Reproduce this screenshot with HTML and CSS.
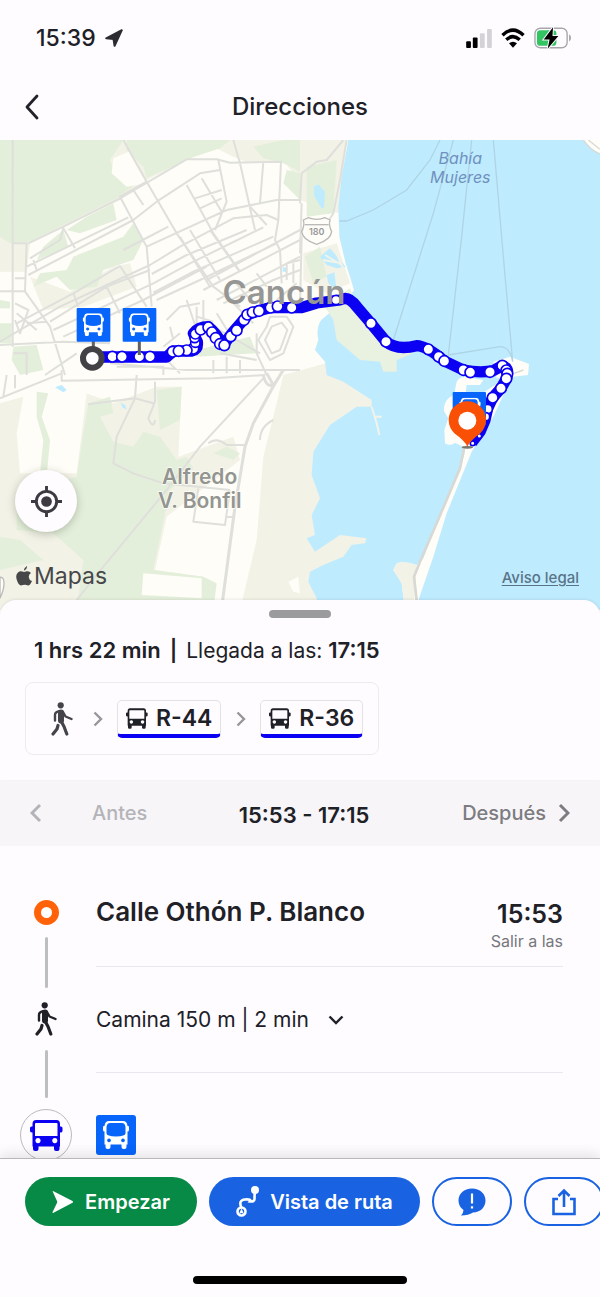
FILE: index.html
```html
<!DOCTYPE html>
<html lang="es">
<head>
<meta charset="utf-8">
<meta name="viewport" content="width=device-width, initial-scale=1">
<title>Direcciones</title>
<link rel="stylesheet" href="styles.css">
</head>
<body>
<svg class="defs" aria-hidden="true">
  <symbol id="bus" viewBox="0 0 33 31"><path fill="currentColor" fill-rule="evenodd" d="M6 0H26.500Q30 0 30 4V6.500H31Q32.500 6.500 32.500 8V11Q32.500 12.500 30 12.500V26.500H29.500V29Q29.500 31 27.500 31H26Q24 31 24 29V26.500H8.500V29Q8.500 31 6.500 31H5Q3 31 3 29V26.500H2.500V12.500Q0 12.500 0 11V8Q0 6.500 1.500 6.500H2.500V4Q2.500 0 6 0ZM6 3Q5 3 5 4V16H27.500V4Q27.500 3 26.500 3ZM8 18a2.600 2.600 0 1 0 .01 0ZM24.800 18a2.600 2.600 0 1 0 .01 0Z"/></symbol>
  <symbol id="bus-round" viewBox="0 0 26 28"><path fill="currentColor" fill-rule="evenodd" d="M6 0H20Q24 0 24.500 5H25Q26 5 26 6V9Q26 10.500 24.500 10.500V23.500H23.500V26Q23.500 28 21.500 28H20.500Q18.500 28 18.500 26V23.500H7.500V26Q7.500 28 5.500 28H4.500Q2.500 28 2.500 26V23.500H1.500V10.500Q0 10.500 0 9V6Q0 5 1 5H1.500Q2 0 6 0ZM7 2Q4 2 3.500 6V12.500Q3.500 15 13 15.500Q22.500 15 22.500 12.500V6Q22 2 19 2ZM6 17.500a1.900 1.900 0 1 0 .01 0ZM20 17.500a1.900 1.900 0 1 0 .01 0Z"/></symbol>
  <symbol id="walk" viewBox="0 0 22 34"><circle cx="9.700" cy="3.300" r="3.100" fill="currentColor"/><path fill="none" stroke="currentColor" stroke-linecap="round" stroke-linejoin="round" d="M10 10.500V18.500" stroke-width="6"/><path fill="none" stroke="currentColor" stroke-linecap="round" stroke-linejoin="round" stroke-width="2.400" d="M8 9.300Q4 10 4 13V18.500M12 10L14.500 14.500L20.500 17"/><path fill="none" stroke="currentColor" stroke-linecap="round" stroke-linejoin="round" stroke-width="3.200" d="M10 19L13 24.500L15.800 32M7 23.500L6 27L2 32"/></symbol>
</svg>
<div class="app">
  <div class="status">
    <span class="clock">15:39</span>
    <svg class="arrow" viewBox="0 0 18 18"><path d="M16.800 1.200L9.600 16.800L8.500 10L1.200 9.300Z" fill="#2b2b31" stroke="#2b2b31" stroke-width="2" stroke-linejoin="round"/></svg>
    <div class="indicators">
      <svg class="signal" viewBox="0 0 27 20"><rect x="0" y="13" width="5" height="7" rx="1"/><rect x="7" y="9" width="5" height="11" rx="1"/><rect x="14.500" y="4.500" width="5" height="15.500" rx="1" fill="#d3d2d7"/><rect x="22" y="0" width="5" height="20" rx="1" fill="#d3d2d7"/></svg>
      <svg class="wifi" viewBox="0 0 24 20"><path d="M1.500 7.200Q12-3 22.500 7.200M5.300 11.800Q12 5.500 18.700 11.800" fill="none" stroke="#000" stroke-width="3.400"/><path d="M8 15.300Q12 12 16 15.300L12 19.700Z"/></svg>
      <svg class="battery" viewBox="0 0 39 22"><rect x="1" y="1" width="33" height="20" rx="5.500" fill="none" stroke="#a6a6ab" stroke-width="1.400"/><rect x="3" y="3" width="20" height="16" rx="3.500" fill="#34c463"/><path d="M36 7.500Q38 8 38 11T36 14.500Z" fill="#a6a6ab"/><path d="M19.500 0L10 12.500H16L14 22L25 9H19Z" fill="#000" stroke="#fefcff" stroke-width="2" paint-order="stroke"/></svg>
    </div>
  </div>
  <header class="bar">
    <button class="back" aria-label="Volver"><svg viewBox="0 0 16 28"><path d="M13 3L3 14L13 25" fill="none" stroke="#22222a" stroke-width="2.800" stroke-linecap="round" stroke-linejoin="round"/></svg></button>
    <h1>Direcciones</h1>
  </header>
  <main class="main">
    <section class="map" aria-label="Mapa">
      <svg class="map-art" viewBox="0 0 1800 1410">
        <rect width="1800" height="1410" fill="#fefdf7"/>
        <g fill="#f2f2e6">
          <path d="M0 0H1020V130H900L850 60L750 70L700 50L640 20L560 60L440 120L360 180L90 310L80 395H0Z"/>
          <path d="M0 790L70 770L50 880L60 1000H230L260 760L340 790L470 740H545L535 950L700 890L720 960L500 1130L465 1290L610 1310L640 1410H0Z"/>
          <path d="M850 705L1230 600V1410H720L770 1200L790 950L820 830Z"/>
          <path d="M900 0H1040L1015 220L900 180Z"/><path d="M910 340L1010 310L1050 430L980 460L910 420Z"/>
          <path d="M210 455L340 380L390 370L410 440L250 500L130 510L90 410Z"/>
        </g>
        <g fill="#e4efdb">
          <path d="M0 0H370L330 60L350 110L410 130L350 175L230 235L90 305L30 310L0 290Z"/>
          <path d="M380 0H690L660 25L570 55L440 115L430 80L380 30Z"/>
          <path d="M760 20L850 0H900V95L850 70L790 55Z"/><path d="M860 90L900 100V180L850 130Z"/>
          <path d="M220 350L370 290L400 250L430 300L400 360L310 390L290 440L210 450L170 410L100 440L120 400L200 390Z"/>
          <path d="M260 230L340 190L350 240L240 280L200 270ZM130 320L190 270L205 320L110 360ZM0 480L30 485V505H0ZM0 550H35V610H0ZM40 620L110 615L130 690L60 705L35 660ZM590 630L750 590L770 640L590 650Z"/>
          <path d="M110 755L145 760L125 830L150 900L140 1010L120 1000L130 900L110 830Z"/>
          <path d="M265 790L330 770L340 820L300 830L340 905L400 920L430 875L480 890L530 960L560 950L580 985L510 1050L460 1290L610 1310L650 1330L640 1410H230L250 1260L160 1180L50 1170L50 1060L230 1010L250 880Z"/>
          <path d="M470 750L545 740L540 840L480 870ZM640 940L680 920L720 940L700 960ZM0 1190L60 1200L130 1260L0 1290Z"/>
          <path d="M920 80L1010 60L1000 220L920 230ZM915 350L960 320L980 410L940 430Z"/>
        </g>
        <g fill="#fefdf7"><path d="M430 1300L605 1315V1375L425 1365ZM865 1325L895 1310L900 1360L880 1355ZM510 90L560 80V120L510 110Z"/><path d="M340 55L385 35L440 130L380 140L335 100Z"/></g>
        <path fill="#bfebff" d="M1045 0L1025 110L1015 200L1018 290L1037 370L1050 410L1062 450L1048 470L975 530Q945 550 955 600L945 630L975 665L980 705L1030 725L1115 780L1115 800L1070 800L990 855L940 935L935 1005L960 1075L935 1125L945 1185L920 1195L945 1235L1020 1185L1100 1195L1095 1210L1055 1215L1030 1250L970 1275L930 1295L925 1325L950 1375V1410H1800V0Z"/>
        <path fill="#e9f1e1" d="M975 500L1050 445L1080 520L1170 610L1240 640L1190 660V695H1150L1140 665L1080 660L1010 600L1000 540Z"/>
        <path fill="#bfebff" d="M941 140L955 133L975 155L972 205L965 205L943 170ZM960 350L990 325L1037 380L1010 385L980 375ZM980 405L1003 397L1010 450L985 430ZM165 742L185 735L200 750L190 757ZM362 788L375 795L380 808L368 803ZM848 380L860 385V395L848 395Z"/>
        <path d="M970 360L1025 370M975 345L1025 375M1005 330L1030 385M1115 800L1130 850L1138 885M1125 830L1145 830" stroke="#f2f3e9" stroke-width="6" fill="none"/>
        <g fill="#fefdf7"><path d="M1750 0H1800V42Q1770 25 1750 0Z"/><path d="M1480 665L1530 650L1587 672L1584 705L1540 710L1490 715Z"/><path d="M1370 725Q1380 708 1400 712L1450 720L1440 735L1400 735L1395 775H1365Q1362 750 1370 725Z"/><path d="M1375 755L1345 775Q1328 795 1333 815L1345 835L1333 870L1335 910Q1350 920 1365 908L1385 918L1395 935L1380 990L1310 1150L1270 1255L1250 1275Q1215 1262 1190 1270L1180 1290L1205 1330L1215 1410H1245L1300 1250L1340 1120L1415 935L1480 830L1540 700L1430 770Z"/></g>
        <path fill="#f2f2e6" d="M1250 1275Q1215 1262 1190 1270L1180 1290L1205 1330L1215 1410H1240Z"/>
        <path d="M1392 925L1380 985L1310 1150L1260 1265L1242 1310L1252 1400" fill="none" stroke="#d8d8d5" stroke-width="8"/>
        <path d="M1750 0Q1770 30 1800 42M1765 0L1800 28M1543 700L1570 690" fill="none" stroke="#d8d8d5" stroke-width="4"/>
        <g fill="none" stroke="#afd4e5" stroke-width="4"><path d="M1320 0L1290 60L1220 150L1120 210L1040 243H1018M1360 0L1300 220L1180 600M1415 0L1385 290L1345 645M1480 0L1510 350L1538 665M1345 645L1500 620Q1530 620 1538 665"/></g>
        <g fill="none" stroke="#dfdfdb" stroke-width="6" stroke-linejoin="round">
          <path d="M38 0V620M0 454H75L80 310H40M85 310L190 260L360 175L560 58H650L690 68L843 65L835 240L825 300L840 330L845 430M370 0L440 125L530 280L640 440L720 500M440 125L360 170L440 320L455 500M85 405L400 240L470 185L600 100L660 90M80 380L385 232M90 355L180 300L190 265L225 325M110 390L100 360M655 60L680 185L645 270M700 0L720 70L765 270M790 65L780 190M680 210L830 180H900M400 150L430 195M560 135L640 280L720 395M605 115L665 215M585 175L665 150M600 205L665 175M440 320L680 210M370 330L505 260"/>
          <path d="M450 375L540 320L700 235L800 225L835 240M455 402L560 345L740 270M460 430L570 370L790 262M460 458L580 395L820 290M470 480L600 420L830 310M0 605L180 500L450 375M50 550L220 460L360 378M150 545L320 440L450 390M160 570L460 430M190 590L430 480L620 380M360 378L440 500M320 440L360 520M220 460L235 500M540 290L630 440M570 270L660 420M630 270L715 390M750 200L800 255M650 480L900 350M670 490L820 420L900 390M610 450L900 300M620 420L900 270M770 400L800 440M700 420L760 490"/>
          <path d="M0 615L190 605L330 610M75 454L150 560L195 705M45 490L85 510L60 580L45 540M45 415H75M80 550L140 545M40 640H80V705M50 520L110 570M135 705L230 640M330 670L560 690H900M350 680H490V705M500 660L540 700M590 500V560L630 590M610 480V560M590 530L640 545M560 480L600 600M650 520L700 600M700 490L760 550M640 560L780 640M500 540L540 500L600 490M510 560L520 600M540 580L490 620M660 640L770 660M640 660V700M680 650V700M720 660V700M770 580V640L800 705M800 560L775 600L810 660L850 640L880 560L860 530L810 530ZM815 560L795 600L815 640L840 630L862 570L845 548ZM860 370L900 360M860 370V420M880 370V430M890 430L830 480"/>
          <path d="M0 775L185 700M185 690V722L640 715L795 705M20 705L10 770M45 705V745M410 705L405 775L350 890L340 970L400 1000L490 1030L690 1050M265 793L405 775L460 790M465 725V785L445 835Q460 870 465 840M790 715L600 920L500 1050L310 1280L230 1380M625 910Q650 890 680 915L735 915M595 1045L580 1145L675 1155L690 1050M680 1130L705 1132M820 840Q780 860 780 900M900 190L905 100L950 65L980 60L1030 0M1040 0L1020 120L1000 220L950 300M905 290L900 500M905 190L900 340"/>
          <path stroke-width="9" d="M825 730L760 850L735 920L705 1100L668 1380M790 705Q800 750 825 730L850 690M800 700L820 735"/>
        </g>
        <g fill="#fefdf7" stroke="#babab9" stroke-width="4"><path d="M925 233Q950 243 975 233L990 240Q985 255 995 275Q992 300 950 313Q908 300 905 275Q915 255 910 240Z"/><path fill="none" d="M914 254H986"/><path d="M0 1312Q12 1310 12 1330T0 1375Z"/></g>
        <g class="labels">
          <text class="shield" x="950" y="286">180</text>
          <text class="bay" x="1381" y="72">Bahía</text><text class="bay" x="1381" y="129">Mujeres</text>
          <text class="town" x="599" y="1031">Alfredo</text><text class="town" x="599" y="1104">V. Bonfil</text>
        </g>
        <path d="M275 651H500L520 633H575Q595 628 592 605L580 580Q595 560 625 560Q645 575 670 615L700 575L745 523Q780 510 810 503L880 503H905L950 489L1020 480Q1045 465 1070 500L1113 550L1158 605Q1190 632 1250 617Q1280 618 1333 663L1390 690Q1440 700 1480 692L1505 678Q1530 680 1520 715L1503 745L1478 773L1463 805L1455 840L1440 875L1415 908" fill="none" stroke="#0b00f2" stroke-width="34" stroke-linejoin="round"/>
        <g class="stops">
          <circle cx="337" cy="650" r="16"/><circle cx="366" cy="650" r="16"/><circle cx="418" cy="650" r="16"/><circle cx="450" cy="650" r="16"/>
          <circle cx="518" cy="635" r="16"/><circle cx="580" cy="626" r="16"/><circle cx="560" cy="631" r="16"/><circle cx="536" cy="633" r="16"/><circle cx="586" cy="608" r="14"/><circle cx="584" cy="594" r="14"/><circle cx="586" cy="582" r="15"/><circle cx="602" cy="569" r="16"/><circle cx="625" cy="562" r="16"/><circle cx="636" cy="577" r="16"/><circle cx="647" cy="594" r="16"/><circle cx="660" cy="612" r="16"/><circle cx="673" cy="616" r="16"/><circle cx="692" cy="589" r="16"/><circle cx="710" cy="571" r="16"/><circle cx="732" cy="540" r="16"/><circle cx="742" cy="524" r="16"/><circle cx="758" cy="517" r="16"/><circle cx="777" cy="513" r="16"/><circle cx="812" cy="503" r="16"/><circle cx="833" cy="499" r="16"/><circle cx="875" cy="503" r="16"/><circle cx="1008" cy="480" r="14"/>
          <circle cx="1113" cy="550" r="16"/><circle cx="1158" cy="605" r="16"/><circle cx="1285" cy="628" r="16"/><circle cx="1316" cy="650" r="16"/><circle cx="1333" cy="663" r="16"/><circle cx="1390" cy="690" r="16"/><circle cx="1411" cy="697" r="16"/><circle cx="1470" cy="696" r="16"/><circle cx="1507" cy="677" r="16"/><circle cx="1519" cy="691" r="16"/><circle cx="1522" cy="701" r="16"/><circle cx="1519" cy="716" r="16"/><circle cx="1503" cy="745" r="16"/><circle cx="1478" cy="773" r="16"/><circle cx="1463" cy="807" r="14"/><circle cx="1457" cy="830" r="12"/><circle cx="1438" cy="888" r="7"/><circle cx="1418" cy="910" r="7"/>
        </g>
        <text class="city" x="852" y="491">Cancún</text>
        <path d="M280 600V650M418 600V645" stroke="#5f5f64" stroke-width="9"/>
        <circle cx="277" cy="655" r="28" fill="#fff" stroke="#414146" stroke-width="18"/>
        <g fill="#0765fb"><rect x="230" y="504" width="101" height="101" rx="3"/><rect x="368" y="504" width="101" height="101" rx="3"/><rect x="1358" y="756" width="100" height="100" rx="3"/></g>
        <g color="#fff"><use href="#bus-round" x="247" y="520" width="66" height="68"/><use href="#bus-round" x="385" y="520" width="66" height="68"/><use href="#bus-round" x="1377" y="773" width="66" height="68"/></g>
        <ellipse cx="1402" cy="922" rx="17" ry="4" fill="#77776f"/>
        <path d="M1402 920Q1395 903 1363 880A56 56 0 1 1 1441 880Q1410 903 1402 920Z" fill="#fa5005"/><circle cx="1402" cy="842" r="27" fill="#fff"/>
      </svg>
      <button class="locate" aria-label="Mi ubicación"><svg viewBox="0 0 32 32"><g fill="none" stroke="#3b3b41" stroke-width="3"><circle cx="16" cy="16" r="10.500"/><path d="M16 0V6M16 26V32M0 16H6M26 16H32"/></g><circle cx="16" cy="16" r="5.500" fill="#3b3b41"/></svg></button>
      <div class="attribution"><svg viewBox="0 0 16 20"><path d="M11 0Q11.500 3 8 4.800Q7.500 2 11 0ZM8 6Q9 6 10.500 5.200Q13.500 4.800 15 7Q12.500 8.500 12.800 11.200Q13 14 16 15Q14 19.500 12 19.500Q10 18.500 8.500 18.700T5 19.500Q2.500 19 1 14.500Q-1 9 2 6.500Q4 4.500 8 6Z" fill="#47474a"/></svg><span>Mapas</span></div>
      <a class="legal" href="#">Aviso legal</a>
    </section>
    <section class="sheet">
      <div class="handle"></div>
      <p class="summary"><strong>1 hrs 22 min</strong><strong class="sep">|</strong>Llegada a las: <strong>17:15</strong></p>
      <div class="legs">
        <svg class="walk"><use href="#walk"/></svg>
        <svg class="next" viewBox="0 0 10 16"><path d="M1.500 1.500L8 8L1.500 14.500"/></svg>
        <span class="line"><svg class="line-bus"><use href="#bus"/></svg>R-44</span>
        <svg class="next" viewBox="0 0 10 16"><path d="M1.500 1.500L8 8L1.500 14.500"/></svg>
        <span class="line"><svg class="line-bus"><use href="#bus"/></svg>R-36</span>
      </div>
    </section>
    <nav class="times">
      <button class="shift before" disabled><svg viewBox="0 0 12 20"><path d="M10 2L2 10L10 18"/></svg>Antes</button>
      <strong class="range">15:53 - 17:15</strong>
      <button class="shift after">Después<svg viewBox="0 0 12 20"><path d="M2 2L10 10L2 18"/></svg></button>
    </nav>
    <section class="steps">
      <div class="step start">
        <div class="track"><i class="origin"></i><i class="rail"></i></div>
        <div class="info"><h2>Calle Othón P. Blanco</h2><div class="depart"><strong>15:53</strong><small>Salir a las</small></div></div>
      </div>
      <div class="step stroll">
        <div class="track"><svg class="walk dark"><use href="#walk"/></svg><i class="rail"></i></div>
        <div class="info"><button class="expand">Camina 150 m | 2 min<svg viewBox="0 0 16 10"><path d="M1.500 1.500L8 8L14.500 1.500"/></svg></button></div>
      </div>
      <div class="step ride">
        <div class="track"><span class="badge"><svg><use href="#bus"/></svg></span></div>
        <div class="info"><span class="tile"><svg><use href="#bus-round"/></svg></span></div>
      </div>
    </section>
  </main>
  <footer class="footer">
    <div class="actions">
      <button class="pill go"><svg viewBox="0 0 21 22"><path d="M.8.8Q.2-.3 1.500.3L20.500 10Q21.500 11 20.500 11.800L1.500 21.700Q.2 22.300.6 21L5.200 11.500V10.500Z" fill="#fff"/></svg>Empezar</button>
      <button class="pill view"><svg viewBox="0 0 23 31"><g fill="none" stroke="#fff" stroke-width="2.600"><path d="M5.500 22Q2 14 9 13.500T14 15.500Q19 16 18.500 12Q18.500 9 19 5"/><circle cx="5.500" cy="25.500" r="4"/></g><circle cx="19" cy="4" r="4" fill="#fff"/><path d="M5.500 22.500L8 28L5.500 27L3 28Z" fill="#fff"/></svg>Vista de ruta</button>
      <button class="pill outline" aria-label="Informar"><svg viewBox="0 0 28 28"><path d="M14 .5C22 .5 27.500 5.500 27.500 12.500S22 24.500 15 24.500C12 26.500 8 27.500 3 27.500Q5.500 25 5.500 22Q.5 18.500.5 12.500C.5 5.500 6 .5 14 .5Z" fill="#1963e3"/><path d="M14 5.500V15.500M14 18.200V20.500" stroke="#fff" stroke-width="2.200"/></svg></button>
      <button class="pill outline" aria-label="Compartir"><svg viewBox="0 0 28 28"><path d="M8 11H3.500V26H24.500V11H20M14 19V3M8.500 8L14 2.500L19.500 8" fill="none" stroke="#1963e3" stroke-width="2.600"/></svg></button>
    </div>
    <div class="home"></div>
  </footer>
</div>
</body>
</html>
```
FILE: styles.css
```css
* { box-sizing: border-box; }
body { margin: 0; background: #fefcff; color: #202027; font-family: Inter, "Liberation Sans", sans-serif; }
button { border: 0; padding: 0; background: none; color: inherit; font: inherit; cursor: pointer; }
h1, h2, p { margin: 0; }
strong { font-weight: 600; }
svg { display: block; flex: none; }
.defs { position: absolute; width: 0; height: 0; }
.app { display: flex; flex-direction: column; height: 100vh; overflow: hidden; }

.status { flex: none; display: flex; align-items: center; gap: 9px; height: 76px; padding: 0 28px 0 36px; }
.clock { font-size: 23px; font-weight: 500; }
.arrow { width: 18px; height: 18px; }
.indicators { display: flex; align-items: center; gap: 9px; margin-left: auto; }
.signal { width: 26px; height: 19px; }
.wifi { width: 24px; height: 20px; }
.battery { width: 38px; height: 22px; }

.bar { flex: none; display: grid; grid-template-columns: 1fr auto 1fr; align-items: center; height: 64px; padding: 0 24px 2px; }
.back svg { width: 16px; height: 28px; }
h1 { font-size: 24px; font-weight: 500; line-height: 32px; }

.main { flex: 1; min-height: 0; display: flex; flex-direction: column; }
.map { position: relative; flex: none; }
.map-art { width: 100%; height: auto; }
.labels text, .city { text-anchor: middle; stroke: #fefdf7; stroke-width: 4px; paint-order: stroke; }
.city { fill: #969695; font-size: 99px; font-weight: 600; stroke: none; }
.labels .town { fill: #939590; font-size: 63px; font-weight: 600; }
.labels .bay { fill: #6f91bd; font-size: 48px; font-style: italic; stroke: none; }
.labels .shield { fill: #98989a; font-size: 27px; font-weight: 600; stroke: none; }
.stops { fill: #fff; stroke: #0b00f2; stroke-width: 5px; }
.locate { position: absolute; left: 15px; bottom: 78px; display: grid; place-items: center; width: 62px; height: 62px; border-radius: 50%; background: #fefcff; box-shadow: 0 2px 8px rgb(60 70 50 / 30%); }
.locate svg { width: 31px; height: 31px; }
.attribution { position: absolute; left: 16px; bottom: 20px; display: flex; align-items: center; gap: 2px; color: #47474a; font-size: 23px; line-height: 28px; }
.attribution svg { width: 16px; height: 20px; }
.legal { position: absolute; right: 21px; bottom: 22px; color: #597487; font-size: 15px; font-weight: 500; line-height: 20px; text-underline-offset: 2px; }

.sheet { position: relative; flex: none; margin-top: -10px; padding: 10px 25px 25px; border-radius: 16px 16px 0 0; background: #fefcff; box-shadow: 0 -1px 3px rgb(0 0 0 / 8%); }
.handle { width: 62px; height: 8px; margin: 0 auto; border-radius: 4px; background: #9b9b9d; }
.summary { margin: 16px 9px 15px; font-size: 21px; line-height: 32px; }
.summary strong { font-size: 22px; }
.summary .sep { margin: 0 9px; font-size: 21px; }
.legs { display: inline-flex; align-items: center; height: 73px; padding: 0 15px 0 25px; border: 1px solid #ececf0; border-radius: 8px; }
.walk { width: 22px; height: 34px; color: #44444a; }
.dark { color: #202027; }
.next { width: 10px; height: 16px; margin: 0 14px 0 20px; }
.line + .next { margin-left: 15px; }
.next path, .shift path, .expand path { fill: none; stroke: #97979b; stroke-width: 2.4px; }
.line { display: flex; align-items: center; gap: 8px; height: 38px; padding: 2px 8px 0; border: 1px solid #e2e2e6; border-bottom: 4px solid #0b00f2; border-radius: 5px; font-size: 23px; font-weight: 600; line-height: 32px; }
.line-bus { width: 22px; height: 21px; }

.times { flex: none; display: grid; grid-template-columns: 1fr auto 1fr; align-items: center; height: 66px; padding: 0 30px; background: #f7f5f8; font-size: 22px; }
.range { padding: 3px 0 0 8px; }
.shift { display: flex; align-items: center; gap: 12px; color: #7c7c81; font-size: 20px; font-weight: 500; }
.shift svg { width: 12px; height: 20px; }
.shift path { stroke: #7c7c81; stroke-width: 3px; }
.before { gap: 50px; color: #b4b4b8; }
.before path { stroke: #b4b4b8; }
.after { justify-self: end; }

.steps { flex: 1; min-height: 0; overflow: hidden; padding: 36px 37px 0 20px; }
.step { display: grid; grid-template-columns: 52px 1fr; gap: 24px; }
.track { display: flex; flex-direction: column; align-items: center; }
.rail { flex: 1; width: 3px; border-radius: 2px; background: #bcbec1; }
.info { border-bottom: 1px solid #e9e8ee; }
.start { height: 107px; }
.start .track { padding-top: 18px; }
.origin { width: 25px; height: 25px; margin-bottom: 12px; border: 7px solid #ff6208; border-radius: 50%; background: #fff; }
.start .info { display: flex; justify-content: space-between; height: 85px; padding-top: 14px; }
.start .rail { flex: none; height: 51px; }
h2 { font-size: 26px; font-weight: 600; line-height: 32px; }
.depart { display: flex; flex-direction: column; align-items: flex-end; gap: 1px; padding-top: 4px; font-size: 25px; line-height: 28px; }
.depart small { color: #77777c; font-size: 16px; line-height: 24px; }
.stroll { height: 120px; }
.stroll .track { padding-top: 13px; }
.stroll .rail { flex: none; height: 48px; margin-top: 14px; }
.stroll .info { height: 84px; padding-top: 15px; }
.expand { display: flex; align-items: center; gap: 19px; font-size: 21px; line-height: 32px; }
.expand svg { width: 16px; height: 10px; }
.expand path { stroke: #202027; }
.badge { display: grid; place-items: center; width: 52px; height: 52px; border: 1px solid #bbbbbf; border-radius: 50%; color: #0b00f2; }
.badge svg { width: 33px; height: 31px; }
.ride .info { padding-top: 6px; }
.tile { display: grid; place-items: center; width: 40px; height: 40px; border-radius: 3px; background: #0765fb; color: #fff; }
.tile svg { width: 26px; height: 28px; }

.footer { position: relative; flex: none; padding-top: 18px; border-top: 1px solid #b8b8bc; background: #fefcff; box-shadow: 0 -4px 12px rgb(0 0 0 / 10%); }
.actions { display: flex; gap: 12px; padding-left: 25px; overflow: hidden; }
.pill { flex: none; display: flex; align-items: center; justify-content: center; height: 49px; border-radius: 25px; color: #fff; font-size: 20px; font-weight: 600; }
.go { width: 172px; gap: 12px; background: #078a45; }
.go svg { width: 21px; height: 22px; }
.view { width: 211px; gap: 11px; background: #1963e3; }
.view svg { width: 23px; height: 31px; }
.outline { width: 80px; border: 2px solid #1963e3; }
.outline svg { width: 28px; height: 28px; }
.home { width: 214px; height: 8px; margin: 50px auto 13px; border-radius: 4px; background: #000; }
```
